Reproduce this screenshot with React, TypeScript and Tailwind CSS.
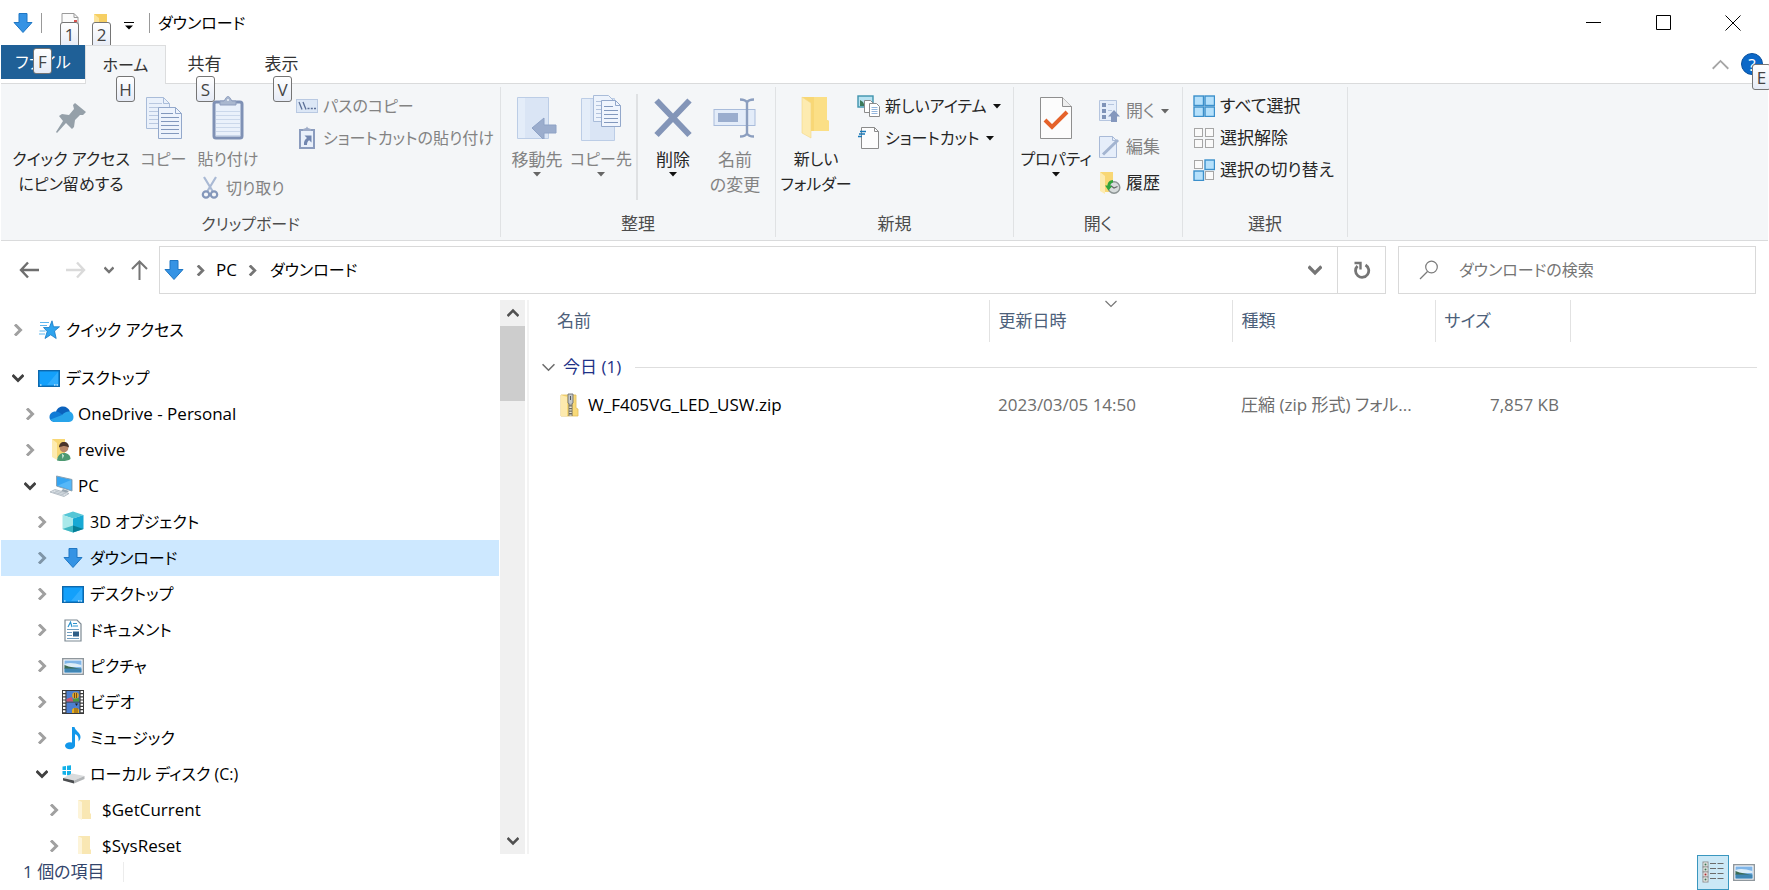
import React from 'react';

type Box = { children?: React.ReactNode; className?: string };

/* ---------- small drawings ---------- */

function Svg({ w, h, children, className = '' }: Box & { w: number; h: number }) {
  return (
    <svg width={w} height={h} viewBox={`0 0 ${w} ${h}`} className={`shrink-0 ${className}`} fill="none" aria-hidden="true">
      {children}
    </svg>
  );
}

const DownArrow = () => (
  <Svg w={20} h={22}>
    <path d="M6 1.500h8v9h5L10 20.500 1 10.500h5z" fill="#3593e4" stroke="#1f77c4" strokeWidth="1" />
  </Svg>
);

const Chevron = ({ dir, size = 12, color = '#9b9b9b', weight = 3 }: { dir: 'right' | 'down' | 'up'; size?: number; color?: string; weight?: number }) => (
  <svg width={size} height={size} viewBox="0 0 12 12" fill="none" stroke={color} strokeWidth={weight} className="shrink-0" aria-hidden="true">
    {dir === 'right' && <path d="M3 0.500 8.500 6 3 11.500" />}
    {dir === 'down' && <path d="M0.500 3 6 8.500 11.500 3" />}
    {dir === 'up' && <path d="M0.500 9 6 3.500 11.500 9" />}
  </svg>
);

const Caret = ({ color = '#111' }: { color?: string }) => (
  <Svg w={8} h={5}>
    <path d="M0 0h8L4 4.500z" fill={color} />
  </Svg>
);

const PageSmall = () => (
  <Svg w={18} h={22}>
    <path d="M1 1.500h12l4 4V20H1z" fill="#fbfbfb" stroke="#9a9a9a" />
    <path d="M13 1.500v4h4" stroke="#9a9a9a" />
    <path d="M13 8h3v2h-3z" fill="#d9534f" />
  </Svg>
);

const FolderTop = () => (
  <Svg w={16} h={22}>
    <path d="M1 2h13v18H1z" fill="#f6cf63" />
    <path d="M1 2l5 4v15l-5-3z" fill="#fce49a" />
  </Svg>
);

const Pin = () => (
  <Svg w={32} h={32}>
    <path d="M20 1 31 10 28 13 25 13 20 18 19 25 17 27 11 21 2 31 1 30 8 19 4 14 7 12 14 13 19 7 18 3z" fill="#95a0a9" />
  </Svg>
);

const pageLines = (x: number, y: number, w: number, n: number, c: string, step = 4) =>
  Array.from({ length: n }, (_, i) => <path key={i} d={`M${x} ${y + i * step}h${w}`} stroke={c} />);

const CopyIcon = () => (
  <Svg w={38} h={43}>
    <path d="M1.500 1.500h17l6 6v25h-23z" fill="#eaf1fb" stroke="#a9bcd9" />
    <path d="M18.500 1.500v6h6" stroke="#a9bcd9" />
    {pageLines(4, 7.5, 13, 1, '#b9c8e0')}
    {pageLines(4, 11.5, 18, 5, '#b9c8e0')}
    <path d="M13.500 11.500h17l6 6v25h-23z" fill="#edf3fc" stroke="#93a8cb" />
    <path d="M30.500 11.500v6h6" stroke="#93a8cb" />
    {pageLines(16, 17.5, 12, 1, '#8298bd')}
    {pageLines(16, 21.5, 18, 5, '#8298bd')}
  </Svg>
);

const PasteIcon = () => (
  <Svg w={32} h={44}>
    <rect x="2" y="6" width="28" height="36" rx="2" fill="#eaf1fb" stroke="#7f91b5" strokeWidth="3" />
    {pageLines(4, 15.5, 24, 7, '#cbd8eb')}
    <path d="M8 9V5h4l2-3c1-2 3-2 4 0l2 3h4v4z" fill="#a9b7cf" stroke="#8d9dbd" />
    <circle cx="16" cy="4" r="1" fill="#eef3fa" />
  </Svg>
);

const Scissors = () => (
  <Svg w={18} h={24}>
    <path d="M3 1 11.500 15M15 1 6.500 15" stroke="#a9b9d4" strokeWidth="2.200" />
    <circle cx="5" cy="18.500" r="3.200" stroke="#8497ba" strokeWidth="2.200" />
    <circle cx="13" cy="18.500" r="3.200" stroke="#8497ba" strokeWidth="2.200" />
  </Svg>
);

const PathIcon = () => (
  <Svg w={22} h={14}>
    <rect x=".5" y=".5" width="21" height="13" fill="#dce7f6" stroke="#b9c9e2" />
    <path d="M3 3 6 10.500M7 3l3 7.500" stroke="#5b6f96" strokeWidth="1.300" />
    <path d="M11.500 9.500h2M14.800 9.500h2M18 9.500h2" stroke="#5b6f96" strokeWidth="1.600" />
  </Svg>
);

const PasteLink = () => (
  <Svg w={18} h={24}>
    <rect x="2" y="4" width="14" height="18" fill="#e9f0fb" stroke="#8b9cbe" strokeWidth="2" />
    <path d="M5 5V3l3-1 1-1.500L10 2l3 1v2z" fill="#9dabc7" />
    <path d="M6.500 9.500h7v7l-2.300-2.300c-1.700 1-2.200 2.600-2.200 4.800H6c-.3-3.500.8-5.700 3-7z" fill="#7186b0" />
  </Svg>
);

const MoveIcon = () => (
  <Svg w={42} h={43}>
    <path d="M1.500 1.500h31v41h-31z" fill="#dae5f5" stroke="#bccde6" />
    <path d="M2 2h7v40H2z" fill="#e4edf9" />
    <path d="M28 22v7h12v8H28v7L16 32z" fill="#9badcd" stroke="#8ea2c5" />
  </Svg>
);

const CopyToIcon = () => (
  <Svg w={42} h={46}>
    <path d="M1.500 3.500h33v42h-33z" fill="#dae5f5" stroke="#bccde6" />
    <path d="M2 4h8v41H2z" fill="#e4edf9" />
    <path d="M13.500.5h15l5 5v21h-20z" fill="#edf3fc" stroke="#a9bcd9" />
    {pageLines(16, 6.500, 12, 5, '#b3c3dd')}
    <path d="M21.500 5.500h14l5 5v21h-19z" fill="#f0f5fd" stroke="#93a8cb" />
    <path d="M35.500 5.500v5h5" stroke="#93a8cb" />
    {pageLines(24, 11.500, 9, 1, '#8298bd')}
    {pageLines(24, 15.500, 14, 4, '#8298bd')}
  </Svg>
);

const DeleteIcon = () => (
  <Svg w={38} h={40}>
    <path d="M2.500 2.500 35.500 37M35.500 2.500 2.500 37" stroke="#8395b8" strokeWidth="6" />
  </Svg>
);

const RenameIcon = () => (
  <Svg w={44} h={42}>
    <rect x="1" y="12.500" width="41" height="16" fill="#e3ecf9" stroke="#a9bcdb" />
    <rect x="5" y="16" width="20" height="9" fill="#9aadce" />
    <path d="M27 2.500c4 0 6 1 7 3 1-2 3-3 7-3M27 39.500c4 0 6-1 7-3 1 2 3 3 7 3M34 5v32" stroke="#8b9ebf" strokeWidth="2.400" />
  </Svg>
);

const NewFolderIcon = () => (
  <Svg w={32} h={44}>
    <path d="M2 1h25v23l2 1v10H10z" fill="#f8d775" />
    <path d="M14 1h13v23l2 1v10H14z" fill="#fbdf86" />
    <path d="M2 1l9 6v35l-9-5z" fill="#fdebb0" stroke="#f3d685" strokeWidth=".6" />
  </Svg>
);

const NewItemIcon = () => (
  <Svg w={24} h={24}>
    <rect x="1" y="2" width="15" height="11" fill="#b9e3f2" stroke="#3f93ad" strokeWidth="1.400" />
    <path d="M3 12V6l3 2 2 4z" fill="#3d7a5a" />
    <path d="M7.500 6.500h6l3 3v9h-9z" fill="#fff" stroke="#8b8b8b" />
    <path d="M12.500 9.500h7l3 3v10h-10z" fill="#fff" stroke="#8b8b8b" />
    {pageLines(14.500, 13.500, 6, 4, '#94b6dd', 2)}
  </Svg>
);

const ShortcutIcon = () => (
  <Svg w={24} h={24}>
    <path d="M4.500 1.500h13l4 4v17h-17z" fill="#fdfdfd" stroke="#8b8b8b" />
    <path d="M17.500 1.500v4h4" stroke="#8b8b8b" />
    <path d="M3 5.500h6M2 8h6M1 10.500h4" stroke="#1a79b8" strokeWidth="1.400" />
  </Svg>
);

const PropertiesIcon = () => (
  <Svg w={34} h={43}>
    <path d="M1.500 1.500h22l9 9v32h-31z" fill="#fcfcfc" stroke="#8f8f8f" />
    <path d="M23.500 1.500v9h9" fill="#eee" stroke="#8f8f8f" />
    <path d="M6 24l7 7 15-15" stroke="#e5622a" strokeWidth="4" />
  </Svg>
);

const OpenIcon = () => (
  <Svg w={24} h={24}>
    <path d="M1.500 1.500h17v20h-17z" fill="#e6eefa" stroke="#b5c5df" />
    <path d="M4 4h4v4H4zM4 10h4v4H4zM4 16h4v4H4z" fill="#7f93b8" />
    <path d="M10 5.500h6M10 11.500h4" stroke="#b5c5df" />
    <path d="M16 11l6 6.500h-3V23h-6v-5.500h-3z" fill="#8497bd" />
  </Svg>
);

const EditIcon = () => (
  <Svg w={24} h={24}>
    <path d="M1.500 1.500h13l4 4v17h-17z" fill="#e6eefa" stroke="#a9bad7" />
    <path d="M14.500 1.500v4h4" stroke="#a9bad7" />
    <path d="M5 19.500 20 5" stroke="#a3b4d0" strokeWidth="3" />
  </Svg>
);

const HistoryIcon = () => (
  <Svg w={24} h={24}>
    <path d="M2 1h13v20H6z" fill="#f8d775" />
    <path d="M2 1l5 4v18l-5-3z" fill="#fdebb0" />
    <circle cx="16" cy="16.500" r="5.800" fill="#d7dcdc" stroke="#8c9494" strokeWidth="1.400" />
    <path d="M12.500 14.500l3.500 2.500 3.500-1.500" stroke="#666" strokeWidth="1.200" />
    <path d="M15 9c-3.500.3-5.500 2.500-5.500 5.500H7l3.500 5 3.800-4.500h-2c.2-1.800 1-3 2.700-3.500z" fill="#2fa53c" />
  </Svg>
);

const SelectIcon = ({ on }: { on: boolean[] }) => (
  <Svg w={22} h={22}>
    {on.map((v, i) => {
      const x = (i % 2) * 11;
      const y = Math.floor(i / 2) * 11;
      return v ? (
        <rect key={i} x={x + 1} y={y + 1} width="9.500" height="9.500" fill="#b5e0fb" stroke="#3b8fcb" strokeWidth="1.400" />
      ) : (
        <rect key={i} x={x + 1.5} y={y + 1.5} width="8" height="8" fill="#fafafa" stroke="#a6a6a6" />
      );
    })}
  </Svg>
);

const StarIcon = () => (
  <Svg w={22} h={20}>
    <path d="M14 .8l1.500 6h6l-5 4.200 1.700 7.500-5.500-3.700L7 18.500 9.200 11.500 5.500 7.500h5.800z" fill="#2fa4ee" stroke="#1579c4" strokeWidth=".8" />
    <path d="M2 2.500h9M2 5.500h7M1.500 11h6M1 14h6" stroke="#5db6ee" strokeWidth="1" />
  </Svg>
);

const DesktopIcon = () => (
  <Svg w={22} h={17}>
    <rect x=".7" y=".7" width="20.600" height="15.600" fill="#13a0fb" stroke="#0d68ad" strokeWidth="1.400" />
    <path d="M9 15 20 2v13z" fill="#3db2ff" opacity=".7" />
    <path d="M2 15h1.500M16 15h1.500M18.500 15H20" stroke="#fff" strokeWidth="1.200" />
  </Svg>
);

const CloudIcon = () => (
  <Svg w={25} h={17}>
    <path d="M7 6C8 2 11 .5 14 .5c3 0 6 2 7 5l-7 4z" fill="#0b62bd" />
    <path d="M6 16c-3.500 0-5.500-2.200-5.500-5 0-3 2.200-5.500 6-5.500 2 0 4 .8 6 2.500l4 4z" fill="#0f7bd6" />
    <path d="M20 5.500c2.500 0 4.500 2.500 4.500 5.500 0 2.800-1.500 5-4.500 5H6c-2 0-3.500-1-4.500-2.500L13 9c2-2 4-3.500 7-3.500z" fill="#28a4ea" />
  </Svg>
);

const UserFolder = () => (
  <Svg w={24} h={24}>
    <path d="M3 1h13v19H8z" fill="#f8d775" />
    <path d="M3 1l5 4v17l-5-3z" fill="#fdebb0" />
    <path d="M8 22.500c.5-5 3-7.500 7-7.500s6.500 2.500 6.500 6c-3 2.300-9 2.500-13.500 1.500z" fill="#4d9a72" />
    <circle cx="15" cy="10" r="4.300" fill="#b98868" />
    <path d="M10 9.500c0-3.500 2-5.500 5-5.500s5 2 5 5.500c-3-2-6-2-10 0z" fill="#4a342a" />
    <path d="M13 15.500l2 2-1.500 3.500z" fill="#d5efe2" />
  </Svg>
);

const PcIcon = () => (
  <Svg w={24} h={22}>
    <path d="M7.500 1l15.500 3.500v11.500L7.500 11z" fill="#35a5f2" stroke="#8aa3b5" />
    <path d="M9 10.500l13-5.500v10z" fill="#6cc4fb" opacity=".6" />
    <path d="M14 14l6 2-2 1.800-6-1.500z" fill="#9aa7b1" />
    <path d="M1 17 6 14.500l14 4-5 3z" fill="#dfe5ea" stroke="#a7b1ba" strokeWidth=".8" />
    <path d="M4 17l11 3M6 16l11 3" stroke="#a7b1ba" strokeWidth=".7" />
  </Svg>
);

const CubeIcon = () => (
  <Svg w={22} h={22}>
    <path d="M11 .5 21.500 4 11 7.500.5 4z" fill="#55c6d6" />
    <path d="M.5 4 11 7.500v14L.5 18z" fill="#a9e9ea" />
    <path d="M21.500 4 11 7.500v14L21.500 18z" fill="#17a9d4" />
    <path d="M.5 18 11 14.500v7z" fill="#3fb8c4" />
    <path d="M21.500 18 11 14.500v7z" fill="#067f96" />
  </Svg>
);

const DocIcon = () => (
  <Svg w={18} h={23}>
    <path d="M1 1h12l4 4v17H1z" fill="#fff" stroke="#7d8a93" strokeWidth="1.200" />
    <path d="M4 8l2.500-5L8 8M9 4.500h4M9 7h5" stroke="#2d94cf" strokeWidth="1.200" />
    <path d="M3 10.500h12M3 13.500h5M3 16.500h5M3 19.500h12" stroke="#6e9dc0" />
    <rect x="9" y="12.500" width="6" height="5" fill="#2f5f87" />
  </Svg>
);

const PictureIcon = () => (
  <Svg w={22} h={17}>
    <rect x=".7" y=".7" width="20.600" height="15.600" fill="#fff" stroke="#8f979d" strokeWidth="1.400" />
    <path d="M2.500 2.500h17v12h-17z" fill="#7fb5e8" />
    <path d="M2.500 6c5-2 10-1 17 1v2h-17z" fill="#dcedf8" />
    <path d="M2.500 7l4 1.500 13 2.500h-17z" fill="#3d6b53" />
    <path d="M2.500 10.500h17v4h-17z" fill="#3f86b4" />
  </Svg>
);

const VideoIcon = () => (
  <Svg w={22} h={24}>
    <path d="M0 0h22v24H0z" fill="#3a3a3a" />
    <path d="M2.200 1v22M19.800 1v22" stroke="#fff" strokeWidth="2.400" strokeDasharray="2 1.200" />
    <path d="M4.500 1h13v10.500h-13zM4.500 12.500h13V23h-13z" fill="#4c7fd0" />
    <circle cx="13.500" cy="5.500" r="3.300" fill="#e0a526" />
    <path d="M4.500 9l5-2 2 4.500h-7z" fill="#c8556f" />
    <path d="M11 9l6-1v3.500h-6z" fill="#4c9a3f" />
    <path d="M10 20c1-3 6-3 7 0v3h-7z" fill="#e9b01e" />
    <path d="M12.500 3v5M14.500 3v5M13 18v5M15 18v5" stroke="#5a3312" strokeWidth=".8" />
    <path d="M13 13.500l1.500 2.500L16 13.500z" fill="#222" />
  </Svg>
);

const MusicIcon = () => (
  <Svg w={18} h={24}>
    <ellipse cx="6" cy="19.800" rx="5" ry="3.500" fill="#1397ea" />
    <path d="M8 1h2.500c.5 4 6 5 6 10 0 1.800-.8 3.300-2 4.500.6-4-1-6.500-3.500-7.200V20H8z" fill="#1397ea" />
  </Svg>
);

const DiskIcon = () => (
  <Svg w={23} h={19}>
    <path d="M.5 1.500 4 1v4H.500zM5 .8 9 .2V5H5zM.5 6H4v4L.5 9.500zM5 6h4v4.700L5 10.200z" fill="#12b1e8" />
    <path d="M1 13l9-4.500L22.500 11 12 15.500z" fill="#d9dbdc" />
    <path d="M12 15.500 22.500 11v3L12 18.500z" fill="#b2b5b7" />
    <path d="M1 13l11 2.500v3L1 15.500z" fill="#4b4e50" />
  </Svg>
);

const PaleFolder = () => (
  <Svg w={16} h={22}>
    <path d="M1 1h12v13l1 1v5H5z" fill="#f9e7b3" />
    <path d="M1 1l4 2v18l-4-2z" fill="#fdf4d9" />
  </Svg>
);

const ZipIcon = () => (
  <Svg w={20} h={24}>
    <path d="M1 2h15v13l2 1v7H1z" fill="#f8d978" stroke="#e2bd55" strokeWidth=".8" />
    <path d="M1 2l6 2v19H1z" fill="#fdeaae" />
    <path d="M10.500 6v17" stroke="#6e6b60" strokeWidth="4" />
    <path d="M10.500 11v12" stroke="#e8e4d2" strokeWidth="2.400" strokeDasharray="1.300 1.300" />
    <path d="M8 1h5v9l-2.500 2L8 10z" fill="#c4c7c8" stroke="#6f7375" strokeWidth=".9" />
    <path d="M10.500 3v4" stroke="#55595b" />
  </Svg>
);

const DetailsIcon = () => (
  <Svg w={22} h={22}>
    {[0, 5, 10, 15].map((y) => (
      <g key={y}>
        <rect x="1" y={y + 1} width="5" height="5" fill="#fff" stroke="#8f8f8f" />
        <path d={`M2.500 ${y + 3.5}h2`} stroke={y === 10 ? '#a03030' : '#3f7355'} strokeWidth="2" />
        <path d={`M8 ${y + 2.5}h6M15.500 ${y + 2.5}h6`} stroke="#6b6b6b" />
      </g>
    ))}
  </Svg>
);

/* ---------- pieces ---------- */

const KeyTip = ({ children, className = '' }: Box) => (
  <kbd className={`absolute z-10 flex h-[26px] w-[19px] items-center justify-center rounded-[3px] border border-[#757575] bg-linear-to-b from-white to-[#e6ebf6] font-[inherit] text-[17px] leading-none text-[#444] ${className}`}>
    {children}
  </kbd>
);

function Big({ icon, lines, width, off, caret }: { icon: React.ReactNode; lines: string[]; width: string; off?: boolean; caret?: boolean }) {
  return (
    <button type="button" className={`flex shrink-0 flex-col items-center whitespace-nowrap pt-3 leading-[25px] ${width} ${off ? 'text-[#838383]' : 'text-[#262626]'}`}>
      <span className="mb-2 flex h-[43px] items-center justify-center">{icon}</span>
      {lines.map((l) => (
        <span key={l}>{l}</span>
      ))}
      {caret && <Caret color={off ? '#666' : '#111'} />}
    </button>
  );
}

function Small({ icon, text, off, caret, tall, size = '' }: { icon: React.ReactNode; text: string; off?: boolean; caret?: boolean; tall?: boolean; size?: string }) {
  return (
    <button type="button" className={`flex items-center whitespace-nowrap ${size} ${tall ? 'h-9' : 'h-8'} ${off ? 'text-[#838383]' : 'text-[#262626]'}`}>
      <span className="flex w-8 shrink-0 justify-center">{icon}</span>
      {text}
      {caret && (
        <span className="ml-1.5">
          <Caret color={off ? '#666' : '#111'} />
        </span>
      )}
    </button>
  );
}

const Group = ({ label, width, children }: Box & { label: string; width: string }) => (
  <section aria-label={label} className={`my-[3px] flex shrink-0 flex-col border-r border-[#e0e2e4] ${width}`}>
    <div className="-mt-[3px] flex flex-1">{children}</div>
    <h2 className="text-center leading-[26px] text-[#4c4c4c]">{label}</h2>
  </section>
);

type Node = { text: string; icon: React.ReactNode; level: number; open?: boolean; active?: boolean; latin?: boolean };

const nodes: Node[] = [
  { text: 'デスクトップ', icon: <DesktopIcon />, level: 0, open: true },
  { text: 'OneDrive - Personal', icon: <CloudIcon />, level: 1, latin: true },
  { text: 'revive', icon: <UserFolder />, level: 1, latin: true },
  { text: 'PC', icon: <PcIcon />, level: 1, open: true, latin: true },
  { text: '3D オブジェクト', icon: <CubeIcon />, level: 2 },
  { text: 'ダウンロード', icon: <DownArrow />, level: 2, active: true },
  { text: 'デスクトップ', icon: <DesktopIcon />, level: 2 },
  { text: 'ドキュメント', icon: <DocIcon />, level: 2 },
  { text: 'ピクチャ', icon: <PictureIcon />, level: 2 },
  { text: 'ビデオ', icon: <VideoIcon />, level: 2 },
  { text: 'ミュージック', icon: <MusicIcon />, level: 2 },
  { text: 'ローカル ディスク (C:)', icon: <DiskIcon />, level: 2, open: true },
  { text: '$GetCurrent', icon: <PaleFolder />, level: 3, latin: true },
  { text: '$SysReset', icon: <PaleFolder />, level: 3, latin: true },
];

const indent = ['pl-[11px]', 'pl-[23px]', 'pl-[35px]', 'pl-[47px]'];

const TreeRow = ({ text, icon, level, open, active, latin }: Node) => (
  <li className={active ? 'bg-[#cde8ff]' : ''}>
    <button type="button" className={`flex h-9 w-full items-center whitespace-nowrap text-left ${indent[level]} ${latin ? 'text-[17px]' : ''}`}>
      <Chevron dir={open ? 'down' : 'right'} color={open ? '#404040' : active ? '#7f95a8' : '#a0a0a0'} size={12} />
      <span className="ml-3 mr-1 flex w-[26px] shrink-0 justify-center">{icon}</span>
      {text}
    </button>
  </li>
);

const Head = ({ children, sorted }: Box & { sorted?: boolean }) => (
  <th scope="col" className="relative h-10 border-r border-[#e2e2e2] p-0 text-left font-normal">
    {sorted && (
      <span className="absolute -top-0.5 left-1/2 -translate-x-1/2">
        <Chevron dir="down" color="#777" weight={1.2} />
      </span>
    )}
    <button type="button" className="block w-full pl-[9px] text-left">
      {children}
    </button>
  </th>
);

/* ---------- page ---------- */

export default function App() {
  return (
    <div className="flex h-screen flex-col overflow-hidden bg-white px-px font-['Open_Sans','Noto_Sans_CJK_JP',sans-serif] text-[16px] leading-6 text-black [font-feature-settings:'palt']">
      <header className="flex h-[45px] shrink-0 items-start">
        <div className="flex h-[45px] items-center">
          <span className="ml-3"><DownArrow /></span>
          <span className="ml-2 h-5 w-px bg-[#999]" />
          <button type="button" aria-label="プロパティ" className="relative ml-[19px]">
            <PageSmall />
            <KeyTip className="-left-px top-2.5">1</KeyTip>
          </button>
          <button type="button" aria-label="新しいフォルダー" className="relative ml-3.5">
            <FolderTop />
            <KeyTip className="-left-px top-2.5">2</KeyTip>
          </button>
          <button type="button" aria-label="カスタマイズ" className="ml-[15px] mt-1.5">
            <Svg w={10} h={8}>
              <path d="M0 .5h10" stroke="#000" />
              <path d="M1 3.500h8L5 7.500z" fill="#000" />
            </Svg>
          </button>
          <span className="ml-[15px] mr-2 h-5 w-px bg-[#999]" />
          <h1>ダウンロード</h1>
        </div>
        <div className="ml-auto flex h-[45px] items-center">
          <button type="button" aria-label="最小化" className="flex h-full w-[70px] items-center justify-center">
            <Svg w={15} h={15}><path d="M0 7.500h15" stroke="#000" /></Svg>
          </button>
          <button type="button" aria-label="最大化" className="flex h-full w-[70px] items-center justify-center">
            <Svg w={15} h={15}><path d="M.5.5h14v14H.5z" stroke="#000" /></Svg>
          </button>
          <button type="button" aria-label="閉じる" className="flex h-full w-[70px] items-center justify-center">
            <Svg w={16} h={16}><path d="M.5.5l15 15M15.500.5l-15 15" stroke="#000" /></Svg>
          </button>
        </div>
      </header>

      <nav aria-label="リボン タブ" className="relative z-10 -mb-px flex h-[39px] shrink-0 items-start text-[#333]">
        <button type="button" className="relative h-[34px] w-[84px] bg-[#1f6097] text-white">
          ファイル
          <KeyTip className="left-8 top-[3px]">F</KeyTip>
        </button>
        <button type="button" className="relative h-[39px] w-[81px] border border-b-0 border-[#dcddde] bg-[#f4f6f8]">
          ホーム
          <KeyTip className="left-[30px] top-[30px]">H</KeyTip>
        </button>
        <button type="button" className="relative h-[38px] w-[77px] text-[17px]">
          共有
          <KeyTip className="left-[30px] top-[31px]">S</KeyTip>
        </button>
        <button type="button" className="relative h-[38px] w-[77px] text-[17px]">
          表示
          <KeyTip className="left-[30px] top-[31px]">V</KeyTip>
        </button>
        <div className="ml-auto flex h-[38px] items-center gap-3 pr-[5px]">
          <button type="button" aria-label="リボンの最小化">
            <Chevron dir="up" size={17} color="#a5a5a5" weight={1.3} />
          </button>
          <button type="button" aria-label="ヘルプ" className="relative flex size-[22px] items-center justify-center rounded-full border border-[#0a519e] bg-[#0b68c8] text-[17px] leading-none text-white">
            ?
            <KeyTip className="left-2.5 top-2.5">E</KeyTip>
          </button>
        </div>
      </nav>

      <div className="flex h-[158px] shrink-0 border-y border-[#dadbdc] bg-[#f4f6f8]">
        <Group label="クリップボード" width="w-[500px]">
          <Big icon={<Pin />} lines={['クイック アクセス', 'にピン留めする']} width="w-[140px]" />
          <Big icon={<CopyIcon />} lines={['コピー']} width="w-[45px]" off />
          <div className="flex w-[105px] shrink-0 flex-col items-start">
            <Big icon={<PasteIcon />} lines={['貼り付け']} width="w-[84px]" off />
            <div className="pl-2">
              <Small icon={<Scissors />} text="切り取り" off />
            </div>
          </div>
          <div className="pt-1.5">
            <Small icon={<PathIcon />} text="パスのコピー" off />
            <Small icon={<PasteLink />} text="ショートカットの貼り付け" off />
          </div>
        </Group>
        <Group label="整理" width="w-[275px] text-[17px]">
          <div className="flex pl-1">
            <Big icon={<MoveIcon />} lines={['移動先']} width="w-16" off caret />
            <Big icon={<CopyToIcon />} lines={['コピー先']} width="w-16 text-[16px]" off caret />
          </div>
          <div className="mx-[3px] mt-2.5 h-[106px] w-0.5 bg-[#dfe1e3]" />
          <Big icon={<DeleteIcon />} lines={['削除']} width="w-16" caret />
          <Big icon={<RenameIcon />} lines={['名前', 'の変更']} width="w-[60px]" off />
        </Group>
        <Group label="新規" width="w-[238px] text-[17px]">
          <Big icon={<NewFolderIcon />} lines={['新しい', 'フォルダー']} width="w-20 -mr-[3px] text-[16px]" />
          <div className="pt-1.5">
            <Small icon={<NewItemIcon />} text="新しいアイテム" caret size="text-[16px]" />
            <Small icon={<ShortcutIcon />} text="ショートカット" caret size="text-[16px]" />
          </div>
        </Group>
        <Group label="開く" width="w-[169px] text-[17px]">
          <Big icon={<PropertiesIcon />} lines={['プロパティ']} width="w-[84px] -mr-1 text-[16px]" caret />
          <div className="pt-[9px]">
            <Small icon={<OpenIcon />} text="開く" off caret tall />
            <Small icon={<EditIcon />} text="編集" off tall />
            <Small icon={<HistoryIcon />} text="履歴" tall />
          </div>
        </Group>
        <Group label="選択" width="w-[165px] text-[17px]">
          <div className="pl-[5px] pt-1.5">
            <Small icon={<SelectIcon on={[true, true, true, true]} />} text="すべて選択" />
            <Small icon={<SelectIcon on={[false, false, false, false]} />} text="選択解除" />
            <Small icon={<SelectIcon on={[false, true, true, false]} />} text="選択の切り替え" />
          </div>
        </Group>
      </div>

      <div className="flex h-[59px] shrink-0 items-start pr-3 pt-[5px]">
        <div className="flex h-12 w-[158px] items-center">
          <button type="button" aria-label="戻る" className="ml-[18px]">
            <Svg w={20} h={18}><path d="M9 1.500 2 9l7 7.500M2 9h18" stroke="#6e6e6e" strokeWidth="2.400" /></Svg>
          </button>
          <button type="button" aria-label="進む" className="ml-[27px]">
            <Svg w={20} h={18}><path d="M11 1.500l7 7.500-7 7.500M18 9H0" stroke="#dadada" strokeWidth="2.400" /></Svg>
          </button>
          <button type="button" aria-label="最近表示した場所" className="ml-[18px]">
            <Chevron dir="down" size={10} color="#757575" weight={3} />
          </button>
          <button type="button" aria-label="上へ" className="ml-[17px]">
            <Svg w={17} h={20}><path d="M1 9l7.500-7.500L16 9M8.500 2v18" stroke="#757575" strokeWidth="2" /></Svg>
          </button>
        </div>
        <div className="flex h-12 flex-1 items-center border border-[#d9d9d9] pl-1">
          <DownArrow />
          <span className="ml-[11px]"><Chevron dir="right" size={11} color="#757575" weight={3} /></span>
          <a href="#pc" className="ml-2.5 text-[17px]">PC</a>
          <span className="ml-2.5"><Chevron dir="right" size={11} color="#757575" weight={3} /></span>
          <a href="#downloads" className="ml-3">ダウンロード</a>
          <button type="button" aria-label="以前の場所" className="ml-auto flex h-full w-11 items-center justify-center">
            <Chevron dir="down" size={14} color="#757575" weight={2.8} />
          </button>
          <button type="button" aria-label="更新" className="flex h-full w-12 items-center justify-center border-l border-[#d9d9d9]">
            <Svg w={18} h={18}>
              <path d="M4.500 5A6.600 6.600 0 1 0 12.500 4" stroke="#757575" strokeWidth="2.800" />
              <path d="M1.500 2h6v6.500" stroke="#757575" strokeWidth="2.400" />
            </Svg>
          </button>
        </div>
        <label className="ml-3 flex h-12 w-[358px] items-center border border-[#d9d9d9] pl-5">
          <Svg w={20} h={20}>
            <circle cx="12.500" cy="7" r="5.800" stroke="#7a7a7a" strokeWidth="1.200" />
            <path d="M8.500 11.500 1 19" stroke="#7a7a7a" strokeWidth="1.200" />
          </Svg>
          <input type="search" aria-label="ダウンロードの検索" placeholder="ダウンロードの検索" className="ml-5 min-w-0 flex-1 outline-none placeholder:text-[#757575]" />
        </label>
      </div>

      <div className="flex min-h-0 flex-1">
        <aside className="flex w-[528px] shrink-0 border-r-2 border-[#f3f3f3]">
          <ul className="min-w-0 flex-1 overflow-hidden pt-3">
            <li className="mb-3">
              <button type="button" className="flex h-9 w-full items-center whitespace-nowrap pl-[11px] text-left">
                <Chevron dir="right" color="#a0a0a0" />
                <span className="ml-3 mr-1 flex w-[26px] justify-center"><StarIcon /></span>
                クイック アクセス
              </button>
            </li>
            {nodes.map((n, i) => (
              <TreeRow key={i} {...n} />
            ))}
          </ul>
          <div className="ml-px mr-0.5 flex w-[25px] flex-col items-center bg-[#f0f0f0]">
            <button type="button" aria-label="上へスクロール" className="flex h-[26px] items-center">
              <Chevron dir="up" color="#505050" weight={2.6} />
            </button>
            <div className="h-[75px] w-full bg-[#cdcdcd]" />
            <button type="button" aria-label="下へスクロール" className="mt-auto flex h-[26px] items-center">
              <Chevron dir="down" color="#505050" weight={2.6} />
            </button>
          </div>
        </aside>

        <main className="min-w-0 flex-1 pr-[11px]">
          <table className="w-full table-fixed border-collapse text-[17px]">
            <colgroup>
              <col className="w-[460px]" />
              <col className="w-[243px]" />
              <col className="w-[203px]" />
              <col className="w-[135px]" />
              <col />
            </colgroup>
            <thead className="text-[#4c607a]">
              <tr>
                <th scope="col" className="h-[42px] border-r border-[#e2e2e2] p-0 text-left font-normal">
                  <button type="button" className="block w-full pl-7 text-left">名前</button>
                </th>
                <Head sorted>更新日時</Head>
                <Head>種類</Head>
                <Head>サイズ</Head>
                <td />
              </tr>
            </thead>
            <tbody>
              <tr>
                <th colSpan={5} scope="rowgroup" className="h-[50px] p-0 font-normal text-[#1e3287]">
                  <button type="button" className="flex w-full items-center pl-[13px]">
                    <Chevron dir="down" size={13} color="#6d6d6d" weight={1.5} />
                    <span className="ml-2">今日 (1)</span>
                    <span className="ml-3.5 h-px flex-1 bg-[#dedede]" />
                  </button>
                </th>
              </tr>
              <tr className="h-[26px] whitespace-nowrap text-[#6d6d6d]">
                <td className="p-0 text-black">
                  <span className="flex items-center gap-2 pl-[31px]">
                    <ZipIcon />
                    W_F405VG_LED_USW.zip
                  </span>
                </td>
                <td className="p-0 pl-[9px]">2023/03/05 14:50</td>
                <td className="p-0 pl-[9px]">圧縮 (zip 形式) フォル...</td>
                <td className="p-0 pr-[11px] text-right">7,857 KB</td>
                <td />
              </tr>
            </tbody>
          </table>
        </main>
      </div>

      <footer className="flex h-9 shrink-0 items-center pl-[22px] pr-[13px] text-[17px] text-[#33456b]">
        <span>1 個の項目</span>
        <span className="ml-[18px] h-5 w-px bg-[#ececec]" />
        <button type="button" aria-label="詳細" aria-pressed="true" className="ml-auto flex h-[35px] w-8 items-center justify-center border border-[#3a97bf] bg-[#cbe8f6]">
          <DetailsIcon />
        </button>
        <button type="button" aria-label="大アイコン" className="ml-1">
          <PictureIcon />
        </button>
      </footer>
    </div>
  );
}
